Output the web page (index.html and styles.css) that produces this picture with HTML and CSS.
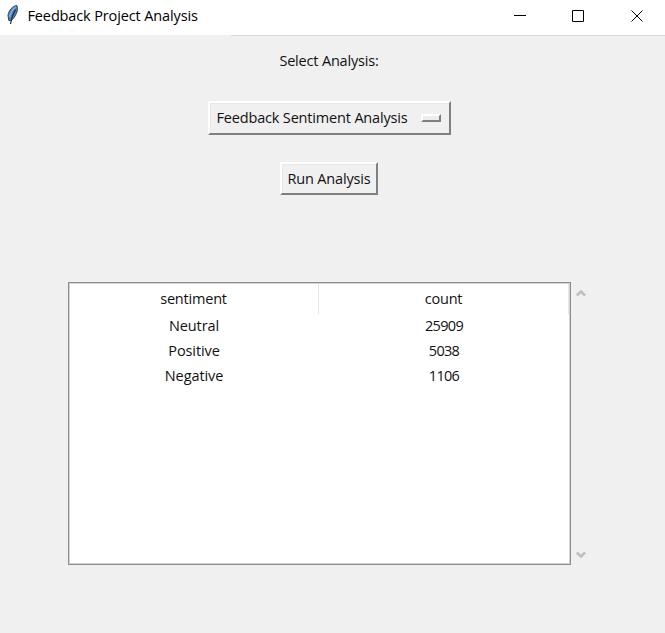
FILE: index.html
```html
<!DOCTYPE html>
<html lang="en">
<head>
<meta charset="utf-8">
<title>Feedback Project Analysis</title>
<link rel="stylesheet" href="styles.css">
</head>
<body>
<header class="titlebar">
  <svg class="feather" width="14" height="22" viewBox="0 0 14 22">
    <path d="M10.800 1.400C6.500 2 2.500 6.500 2 11.500L2.800 16.500 5 16.700C9.500 13 13 6 10.800 1.400Z" fill="#4a80b8" stroke="#3a4450" stroke-width="1"/>
    <path d="M9.800 3C6.500 5.500 4.300 9 3.600 13" fill="none" stroke="#85b8e8" stroke-width="1.300"/>
    <path d="M9.500 5.500C7.500 9 5.500 13 4.500 20" fill="none" stroke="#242a30" stroke-width="1.200"/>
  </svg>
  <h1 class="title">Feedback Project Analysis</h1>
  <svg class="controls" width="131" height="13" viewBox="0 0 131 13" fill="none" stroke="#000">
    <path d="M0 5.500H12M58.500 .5H69.500V11.500H58.500ZM117.500 .5L128.500 11.500M128.500 .5L117.500 11.500"/>
  </svg>
</header>
<main class="content">
  <div class="label">Select Analysis:</div>
  <button class="raised option"><span class="option-text">Feedback Sentiment Analysis</span><i class="indicator"></i></button>
  <button class="raised run"><span class="run-text">Run Analysis</span></button>
  <section class="results">
    <div class="tree">
      <div class="row head"><span>sentiment</span><span>count</span></div>
      <div class="row"><span>Neutral</span><span class="num">25909</span></div>
      <div class="row"><span>Positive</span><span class="num">5038</span></div>
      <div class="row"><span>Negative</span><span class="num">1106</span></div>
    </div>
    <div class="scrollbar">
      <svg width="10" height="8" viewBox="0 0 10 8"><path d="M.8 6.500L5 2.500 9.200 6.500" fill="none" stroke="#bfbfbf" stroke-width="2.600"/></svg>
      <svg width="10" height="8" viewBox="0 0 10 8"><path d="M.8 1.500L5 5.500 9.200 1.500" fill="none" stroke="#bfbfbf" stroke-width="2.600"/></svg>
    </div>
  </section>
</main>
</body>
</html>
```
FILE: styles.css
```css
* { box-sizing: border-box; }
body {
  margin: 0;
  height: 633px;
  overflow: hidden;
  background: #f0f0f0;
  color: #111;
  font: 14.5px/20px "Open Sans", "Noto Sans", sans-serif;
  white-space: nowrap;
}
.titlebar {
  display: flex;
  align-items: flex-start;
  height: 36px;
  background: linear-gradient(#d9d9d9, #d9d9d9) 231px 35px / 434px 1px no-repeat, linear-gradient(#fff 35px, #f0f0f0 35px);
}
.feather { margin: 4px 0 0 6px; }
.title {
  width: 180px;
  margin: 6px 0 0 7.5px;
  color: #000;
  font-size: 14.5px;
  font-weight: 400;
  letter-spacing: -0.13px;
}
.controls { margin: 10px 20px 0 auto; }
.content {
  display: flex;
  flex-direction: column;
  align-items: center;
  width: 658px;
  padding-top: 15px;
}
.label { letter-spacing: -0.18px; }
.raised {
  display: flex;
  align-items: center;
  padding: 0;
  border: 2px solid;
  border-color: #fff #808080 #808080 #fff;
  background: #f0f0f0;
  color: #111;
  font: inherit;
  box-shadow: inset 1px 1px #e8e8e8;
}
.option {
  justify-content: space-between;
  width: 243px;
  height: 34px;
  margin-top: 30px;
  padding: 0 8px 0 7px;
  letter-spacing: -0.17px;
}
.indicator {
  width: 20px;
  height: 8px;
  border: 2px solid;
  border-color: #fff #808080 #808080 #fff;
  background: #ececec;
}
.run {
  justify-content: center;
  width: 98px;
  height: 33px;
  margin-top: 27px;
  letter-spacing: -0.16px;
}
.results {
  display: flex;
  align-self: flex-start;
  margin: 87px 0 0 68px;
}
.tree {
  width: 503px;
  height: 283px;
  border: 1px solid #888d96;
  outline: 1px solid #d0d3d8;
  outline-offset: -2px;
  background: #fff;
}
.row {
  display: grid;
  grid-template-columns: 250px 250px;
  height: 25px;
  line-height: 25px;
  text-align: center;
  letter-spacing: -0.1px;
}
.head {
  height: 30px;
  line-height: 31px;
  letter-spacing: -0.2px;
}
.head span { border-right: 1px solid #e5e5e5; }
.row .num { letter-spacing: -0.7px; }
.scrollbar {
  display: flex;
  flex-direction: column;
  justify-content: space-between;
  width: 20px;
  padding: 7px 0 6px 5px;
}
```
